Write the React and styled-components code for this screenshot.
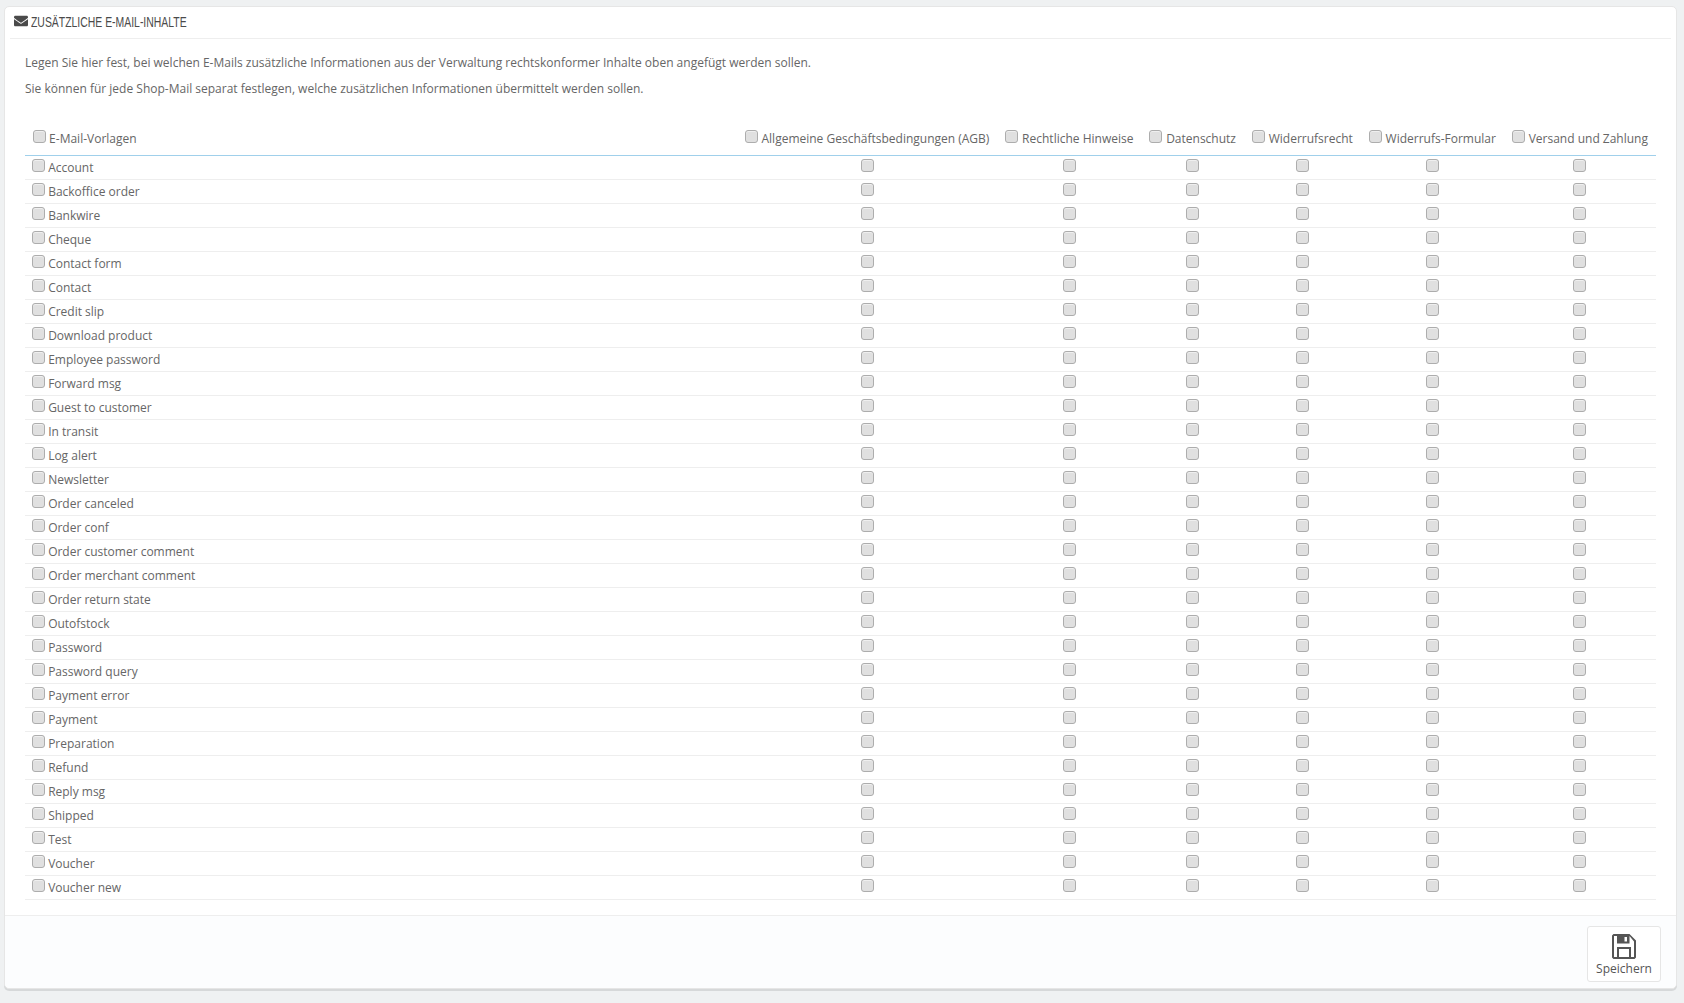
import React from "react";
import styled, { createGlobalStyle } from "styled-components";
import { FaEnvelope } from "react-icons/fa";

const GlobalStyle = createGlobalStyle`
  html, body {
    margin: 0;
    background: #eff1f2;
  }
  body {
    font-family: "Open Sans", "Liberation Sans", sans-serif;
    font-size: 12px;
    color: #666;
  }
`;

const Page = styled.div`
  padding: 6px 7px 14px 4px;
`;

const Panel = styled.form`
  background: #fff;
  border: 1px solid #e6e6e6;
  border-radius: 5px;
  box-shadow: 0 2px 0 rgba(0, 0, 0, 0.1);
  display: block;
`;

const Heading = styled.div`
  box-sizing: border-box;
  display: flex;
  align-items: center;
  gap: 3px;
  height: 32px;
  margin: 0 5px;
  padding: 0 0 3px 4px;
  border-bottom: 1px solid #eee;
  color: #4a4a4a;
  svg {
    font-size: 14px;
  }
`;

// no condensed family is installed, so the title is squeezed horizontally
const HeadingText = styled.span`
  display: inline-block;
  font-family: "Liberation Sans", sans-serif;
  font-size: 15px;
  text-transform: uppercase;
  transform: scaleX(0.695);
  transform-origin: left center;
  white-space: nowrap;
`;

const Body = styled.div`
  padding: 0 20px 15px;
`;

const Intro = styled.p`
  margin: 0;
  line-height: 26px;
  &:first-child {
    margin-top: 11px;
  }
`;

const Table = styled.table`
  width: 100%;
  margin-top: 13px;
  border-collapse: collapse;
`;

const HeadCell = styled.th`
  height: 36px;
  padding: 0 8px 4px;
  font-weight: 400;
  white-space: nowrap;
  text-align: ${(p) => (p.$first ? "left" : "center")};
  width: ${(p) => (p.$first ? "100%" : "auto")};
  border-bottom: 1px solid #a0d0eb;
  vertical-align: bottom;
  line-height: 24px;
`;

const RowHead = styled.td`
  height: 23px;
  padding: 0 0 0 7px;
  border-bottom: 1px solid #eee;
  white-space: nowrap;
`;

const Cell = styled.td`
  height: 23px;
  padding: 0 8px;
  border-bottom: 1px solid #eee;
  text-align: center;
`;

const Check = styled.input.attrs({ type: "checkbox" })`
  appearance: none;
  width: 13px;
  height: 13px;
  margin: 0;
  border: 1px solid #adadad;
  border-radius: 3px;
  background: #e0e0e0;
  box-shadow: inset 0 1px 0 #efefef;
  vertical-align: 0;
`;

const ColumnCheck = styled(Check)`
  margin-right: 0.6px;
`;

const Footer = styled.div`
  display: flex;
  justify-content: flex-end;
  padding: 10px 15px 6px 0;
  background: #fcfdfe;
  border-top: 1px solid #eee;
  border-radius: 0 0 5px 5px;
`;

const SaveButton = styled.button`
  display: flex;
  flex-direction: column;
  align-items: center;
  width: 74px;
  height: 56px;
  padding: 7px 0 0;
  background: #fff;
  border: 1px solid #e6e6e6;
  border-radius: 3px;
  font-family: "Open Sans", "Liberation Sans", sans-serif;
  font-size: 12px;
  color: #555;
  line-height: 20px;
`;

const SaveIcon = () => (
  <svg width="24" height="25" viewBox="0 0 24 25" aria-hidden="true">
    <path
      fill="#555"
      fillRule="evenodd"
      d="M0 1.500 1.500 0H17.500L24 6.500V23.500L22.500 25H1.500L0 23.500ZM2 2V23H5V13H19V23H22V7.500L17.500 2V9.500H5V2ZM7 15V23H17V15ZM12.500 3V7.500H15V3Z"
    />
  </svg>
);

const columns = [
  "Allgemeine Geschäftsbedingungen (AGB)",
  "Rechtliche Hinweise",
  "Datenschutz",
  "Widerrufsrecht",
  "Widerrufs-Formular",
  "Versand und Zahlung",
];

const mails = [
  "Account",
  "Backoffice order",
  "Bankwire",
  "Cheque",
  "Contact form",
  "Contact",
  "Credit slip",
  "Download product",
  "Employee password",
  "Forward msg",
  "Guest to customer",
  "In transit",
  "Log alert",
  "Newsletter",
  "Order canceled",
  "Order conf",
  "Order customer comment",
  "Order merchant comment",
  "Order return state",
  "Outofstock",
  "Password",
  "Password query",
  "Payment error",
  "Payment",
  "Preparation",
  "Refund",
  "Reply msg",
  "Shipped",
  "Test",
  "Voucher",
  "Voucher new",
];

export default function App() {
  return (
    <Page>
      <GlobalStyle />
      <Panel onSubmit={(e) => e.preventDefault()}>
        <Heading>
          <FaEnvelope />
          <HeadingText>Zusätzliche E-Mail-Inhalte</HeadingText>
        </Heading>
        <Body>
          <Intro>
            Legen Sie hier fest, bei welchen E-Mails zusätzliche Informationen aus der Verwaltung rechtskonformer Inhalte oben angefügt werden sollen.
          </Intro>
          <Intro>
            Sie können für jede Shop-Mail separat festlegen, welche zusätzlichen Informationen übermittelt werden sollen.
          </Intro>
          <Table>
            <thead>
              <tr>
                <HeadCell $first>
                  <Check /> E-Mail-Vorlagen
                </HeadCell>
                {columns.map((c) => (
                  <HeadCell key={c}>
                    <ColumnCheck /> {c}
                  </HeadCell>
                ))}
              </tr>
            </thead>
            <tbody>
              {mails.map((m) => (
                <tr key={m}>
                  <RowHead>
                    <Check /> {m}
                  </RowHead>
                  {columns.map((c) => (
                    <Cell key={c}>
                      <Check />
                    </Cell>
                  ))}
                </tr>
              ))}
            </tbody>
          </Table>
        </Body>
        <Footer>
          <SaveButton type="submit">
            <SaveIcon />
            Speichern
          </SaveButton>
        </Footer>
      </Panel>
    </Page>
  );
}
